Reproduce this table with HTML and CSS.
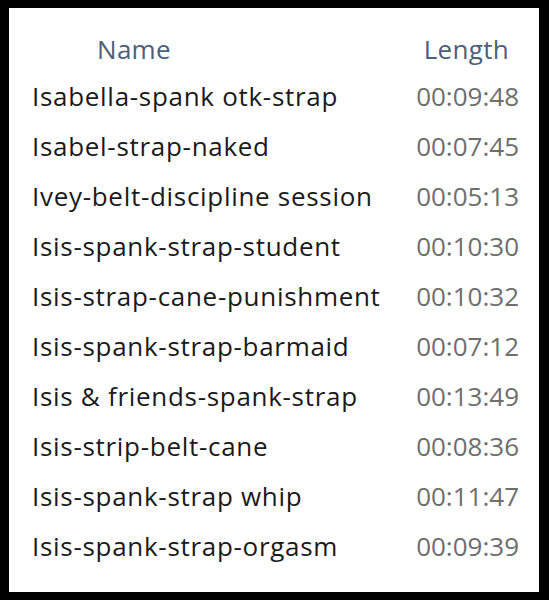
FILE: index.html
```html
<!DOCTYPE html>
<html lang="en">
<head>
    <meta charset="UTF-8">
    <title>Videos</title>
    <link rel="stylesheet" href="styles.css">
</head>
<body>
    <div class="frame">
        <div class="list">
            <div class="head">
                <span class="col-name">Name</span>
                <span class="col-length">Length</span>
            </div>
            <div class="row"><span class="name">Isabella-spank otk-strap</span><span class="length">00:09:48</span></div>
            <div class="row"><span class="name">Isabel-strap-naked</span><span class="length">00:07:45</span></div>
            <div class="row"><span class="name">Ivey-belt-discipline session</span><span class="length">00:05:13</span></div>
            <div class="row"><span class="name">Isis-spank-strap-student</span><span class="length">00:10:30</span></div>
            <div class="row"><span class="name">Isis-strap-cane-punishment</span><span class="length">00:10:32</span></div>
            <div class="row"><span class="name">Isis-spank-strap-barmaid</span><span class="length">00:07:12</span></div>
            <div class="row"><span class="name">Isis &amp; friends-spank-strap</span><span class="length">00:13:49</span></div>
            <div class="row"><span class="name">Isis-strip-belt-cane</span><span class="length">00:08:36</span></div>
            <div class="row"><span class="name">Isis-spank-strap whip</span><span class="length">00:11:47</span></div>
            <div class="row"><span class="name">Isis-spank-strap-orgasm</span><span class="length">00:09:39</span></div>
        </div>
    </div>
</body>
</html>
```

FILE: styles.css
```css
body {
    margin: 0;
    background: #000;
    font-family: "Open Sans", "DejaVu Sans", sans-serif;
}
.frame {
    width: 549px;
    height: 600px;
    padding: 8px 10px 8px 9px;
    box-sizing: border-box;
}
.list {
    background: #fff;
    height: 100%;
    padding: 18px 0 0 0;
    box-sizing: border-box;
}
.head, .row {
    display: flex;
    justify-content: space-between;
    align-items: center;
    height: 50px;
}
.head {
    height: 45px;
    color: #4c607a;
    font-size: 26px;
    letter-spacing: 0.3px;
}
.col-name {
    margin-left: 88px;
}
.col-length {
    margin-right: 30px;
}
.row {
    font-size: 26px;
    color: #1a1a1a;
    letter-spacing: 0.7px;
}
.name {
    margin-left: 23px;
}
.length {
    margin-right: 20px;
    color: #6e6e6e;
    letter-spacing: 0;
}
```
